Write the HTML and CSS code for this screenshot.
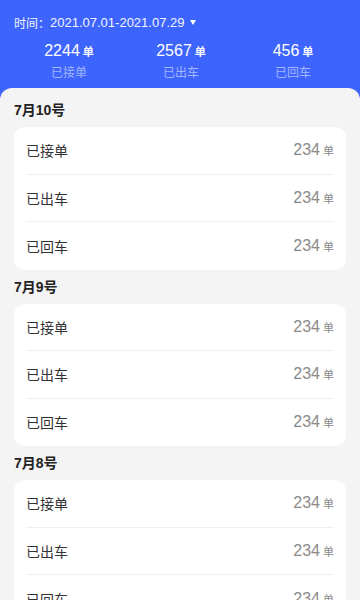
FILE: index.html
```html
<!DOCTYPE html>
<html lang="zh">
<head>
<meta charset="utf-8">
<link rel="stylesheet" href="styles.css">
</head>
<body>
<div class="page">
  <header class="header">
    <div class="time-row">
      <span class="time-label">时间：</span><span class="time-value">2021.07.01-2021.07.29</span><span class="caret"></span>
    </div>
    <div class="stats">
      <div class="stat">
        <div class="stat-num">2244<span class="unit">单</span></div>
        <div class="stat-label">已接单</div>
      </div>
      <div class="stat">
        <div class="stat-num">2567<span class="unit">单</span></div>
        <div class="stat-label">已出车</div>
      </div>
      <div class="stat">
        <div class="stat-num">456<span class="unit">单</span></div>
        <div class="stat-label">已回车</div>
      </div>
    </div>
  </header>
  <main class="panel">
    <section class="day">
      <h2 class="day-title">7月10号</h2>
      <div class="card">
        <div class="row"><span class="row-name">已接单</span><span class="row-val">234<span class="row-unit">单</span></span></div>
        <div class="row"><span class="row-name">已出车</span><span class="row-val">234<span class="row-unit">单</span></span></div>
        <div class="row"><span class="row-name">已回车</span><span class="row-val">234<span class="row-unit">单</span></span></div>
      </div>
    </section>
    <section class="day">
      <h2 class="day-title">7月9号</h2>
      <div class="card">
        <div class="row"><span class="row-name">已接单</span><span class="row-val">234<span class="row-unit">单</span></span></div>
        <div class="row"><span class="row-name">已出车</span><span class="row-val">234<span class="row-unit">单</span></span></div>
        <div class="row"><span class="row-name">已回车</span><span class="row-val">234<span class="row-unit">单</span></span></div>
      </div>
    </section>
    <section class="day">
      <h2 class="day-title">7月8号</h2>
      <div class="card">
        <div class="row"><span class="row-name">已接单</span><span class="row-val">234<span class="row-unit">单</span></span></div>
        <div class="row"><span class="row-name">已出车</span><span class="row-val">234<span class="row-unit">单</span></span></div>
        <div class="row"><span class="row-name">已回车</span><span class="row-val">234<span class="row-unit">单</span></span></div>
      </div>
    </section>
  </main>
</div>
</body>
</html>
```
FILE: styles.css
```css
* { box-sizing: border-box; }
html, body {
  margin: 0;
  padding: 0;
  height: 100%;
  overflow: hidden;
}
body {
  font-family: "Liberation Sans", "Noto Sans CJK SC", sans-serif;
  background: #3e64fe;
}
.page {
  background: #3e64fe;
  min-height: 600px;
}
.header {
  padding: 12px 0 6px;
  color: #fff;
}
.time-row {
  display: flex;
  align-items: center;
  height: 20px;
  padding-left: 14px;
  color: #f2f5ff;
}
.time-label {
  font-size: 12px;
}
.time-value {
  font-size: 13px;
}
.caret {
  width: 0;
  height: 0;
  margin-left: 6px;
  border-left: 3.5px solid transparent;
  border-right: 3.5px solid transparent;
  border-top: 5px solid #fff;
}
.stats {
  display: grid;
  grid-template-columns: repeat(3, 1fr);
  padding: 0 11px 0 13px;
  margin-top: 8px;
}
.stat {
  display: flex;
  flex-direction: column;
  align-items: center;
}
.stat-num {
  font-size: 16px;
  line-height: 22px;
  height: 22px;
  color: #fff;
}
.unit {
  font-size: 11px;
  font-weight: bold;
  margin-left: 3px;
}
.stat-label {
  margin-top: 2px;
  font-size: 12px;
  line-height: 18px;
  color: #a3b6ff;
}
.panel {
  background: #f4f4f4;
  border-radius: 12px 12px 0 0;
  padding: 5px 14px 20px;
  min-height: 520px;
}
.day-title {
  margin: 0;
  font-size: 14px;
  font-weight: bold;
  line-height: 34px;
  color: #222;
}
.card {
  background: #fff;
  border-radius: 11px;
  padding: 0 12px;
}
.row {
  display: flex;
  align-items: center;
  justify-content: space-between;
  height: 47.5px;
  border-bottom: 1px solid #efefef;
}
.row:last-child {
  height: 47.5px;
  border-bottom: none;
}
.row-name {
  font-size: 14px;
  color: #333;
}
.row-val {
  font-size: 16px;
  color: #8a8a8a;
}
.row-unit {
  font-size: 11px;
  margin-left: 3px;
  color: #8a8a8a;
}
```
